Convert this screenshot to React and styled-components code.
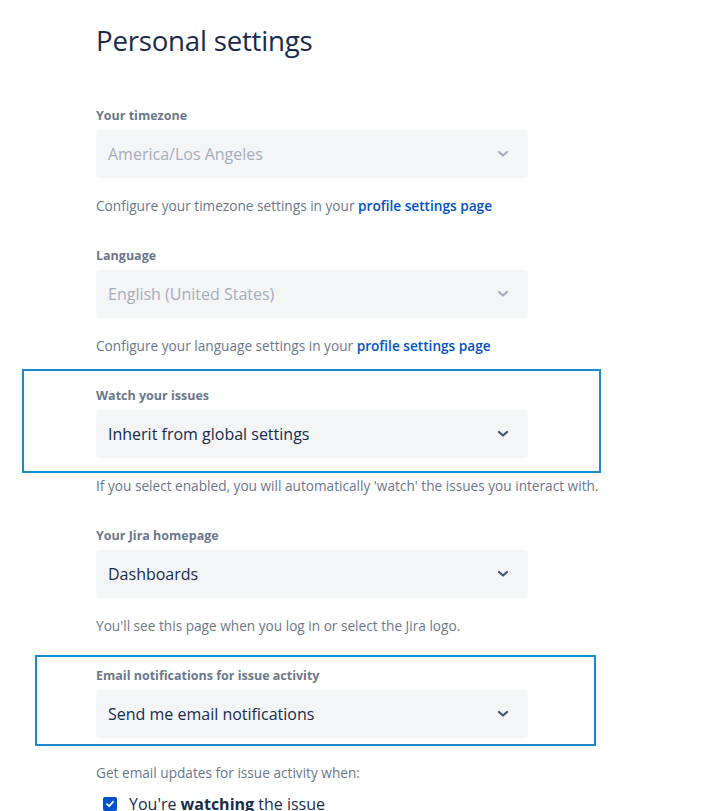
import React from "react";
import styled, { createGlobalStyle } from "styled-components";

const Global = createGlobalStyle`
  html, body { margin: 0; padding: 0; background: #fff; }
  body { font-family: "Open Sans", "Noto Sans", sans-serif; color: #172B4D; }
  * { box-sizing: border-box; }
`;

const Page = styled.div`
  position: relative;
  padding: 22px 0 0 96px;
  width: 727px;
  height: 811px;
  overflow: hidden;
`;

const Title = styled.h1`
  margin: 0 0 50px;
  font-size: 27.6px;
  line-height: 36px;
  font-weight: 500;
  color: #172B4D;
  letter-spacing: -0.2px;
`;

const Section = styled.div`
  display: flex;
  flex-direction: column;
  margin-bottom: 32px;
`;

const Label = styled.label`
  font-size: 12.5px;
  line-height: 16px;
  font-weight: 700;
  color: #6B778C;
  margin-bottom: 6px;
`;

const SelectBox = styled.div`
  width: 432px;
  height: 48px;
  background: #F4F5F7;
  border-radius: 4px;
  display: flex;
  align-items: center;
  justify-content: space-between;
  padding: 0 19px 0 12px;
  font-size: 16px;
  color: ${(p) => (p.$disabled ? "#A5ADBA" : "#172B4D")};
`;

const Help = styled.p`
  margin: ${(p) => (p.$gap ? p.$gap : 18)}px 0 0;
  font-size: 13.65px;
  line-height: 20px;
  color: #6B778C;
`;

const Link = styled.a`
  color: #0052CC;
  font-weight: 600;
  text-decoration: none;
`;

const Highlight = styled.div`
  position: absolute;
  border: 2px solid #1B8ACF;
  pointer-events: none;
`;

const CheckRow = styled.div`
  display: flex;
  align-items: center;
  gap: 12px;
  margin-top: 11px;
  padding-left: 7px;
  font-size: 16px;
  line-height: 20px;
  color: #172B4D;
`;

const CheckBox = styled.span`
  width: 14px;
  height: 14px;
  border-radius: 2px;
  background: #0052CC;
  display: inline-flex;
  align-items: center;
  justify-content: center;
`;

const Chevron = ({ color }) => (
  <svg width="12" height="8" viewBox="0 0 12 8">
    <path d="M2 2 L6 5.5 L10 2" fill="none" stroke={color} strokeWidth="2.2" strokeLinecap="round" strokeLinejoin="round" />
  </svg>
);

const Field = ({ label, value, disabled, help }) => (
  <Section>
    <Label>{label}</Label>
    <SelectBox $disabled={disabled}>
      <span>{value}</span>
      <Chevron color={disabled ? "#A5ADBA" : "#42526E"} />
    </SelectBox>
    {help && <Help>{help}</Help>}
  </Section>
);

export default function App() {
  return (
    <>
      <Global />
      <Page>
        <Title>Personal settings</Title>
        <Field
          label="Your timezone"
          value="America/Los Angeles"
          disabled
          help={<>Configure your timezone settings in your <Link href="#">profile settings page</Link></>}
        />
        <Field
          label="Language"
          value="English (United States)"
          disabled
          help={<>Configure your language settings in your <Link href="#">profile settings page</Link></>}
        />
        <Field
          label="Watch your issues"
          value="Inherit from global settings"
          help="If you select enabled, you will automatically 'watch' the issues you interact with."
        />
        <Field
          label="Your Jira homepage"
          value="Dashboards"
          help="You'll see this page when you log in or select the Jira logo."
        />
        <Section>
          <Label>Email notifications for issue activity</Label>
          <SelectBox>
            <span>Send me email notifications</span>
            <Chevron color="#42526E" />
          </SelectBox>
          <Help $gap={25}>Get email updates for issue activity when:</Help>
          <CheckRow>
            <CheckBox>
              <svg width="10" height="10" viewBox="0 0 10 10">
                <path d="M2 5.2 L4.2 7.2 L8 2.8" fill="none" stroke="#fff" strokeWidth="1.8" strokeLinecap="round" strokeLinejoin="round" />
              </svg>
            </CheckBox>
            <span>You're <b>watching</b> the issue</span>
          </CheckRow>
        </Section>
        <Highlight style={{ left: 22, top: 369, width: 579, height: 104 }} />
        <Highlight style={{ left: 35, top: 655, width: 561, height: 91 }} />
      </Page>
    </>
  );
}
